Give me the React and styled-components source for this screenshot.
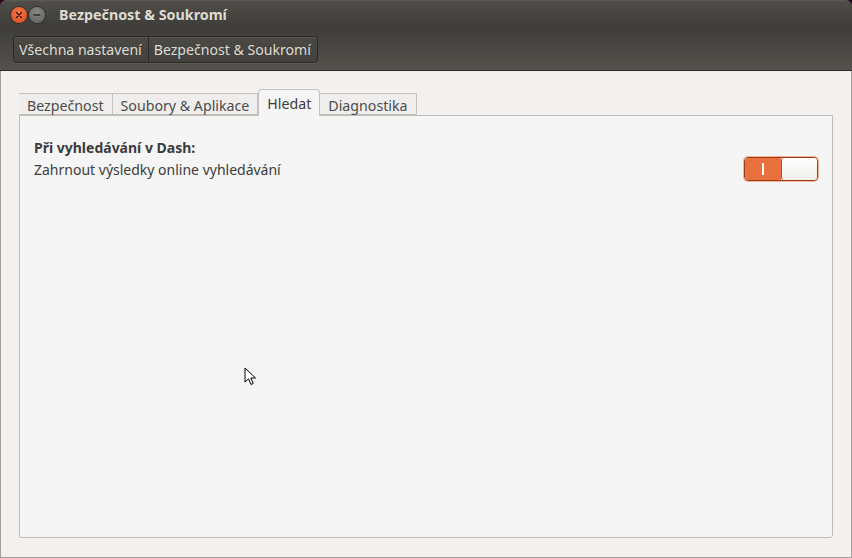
import styled, { createGlobalStyle } from "styled-components";

const GlobalStyle = createGlobalStyle`
  html, body {
    margin: 0;
    padding: 0;
    background: #2c001e;
  }
  body {
    font-family: "Noto Sans", "DejaVu Sans", sans-serif;
  }
`;

const tabs = ["Bezpečnost", "Soubory & Aplikace", "Hledat", "Diagnostika"];

const App = () => {
  return (
    <>
      <GlobalStyle />
      <Window>
        <TitleBar>
          <WinButton $kind="close">
            <svg width="8" height="8" viewBox="0 0 8 8">
              <path d="M1.5 1.5 L6.5 6.5 M6.5 1.5 L1.5 6.5" stroke="#3a1408" strokeWidth="1.3" strokeLinecap="round" />
            </svg>
          </WinButton>
          <WinButton $kind="min">
            <svg width="8" height="8" viewBox="0 0 8 8">
              <path d="M1 4 L7 4" stroke="#2e2d2a" strokeWidth="1.4" strokeLinecap="round" />
            </svg>
          </WinButton>
          <Title>Bezpečnost &amp; Soukromí</Title>
        </TitleBar>
        <Toolbar>
          <Breadcrumbs>
            <Crumb>Všechna nastavení</Crumb>
            <Crumb $last>Bezpečnost &amp; Soukromí</Crumb>
          </Breadcrumbs>
        </Toolbar>
        <Content>
          <TabRow>
            {tabs.map((t) => (
              <Tab key={t} $active={t === "Hledat"}>
                {t}
              </Tab>
            ))}
            <TabFill />
          </TabRow>
          <Panel>
            <Row>
              <TextCol>
                <Heading>Při vyhledávání v Dash:</Heading>
                <Label>Zahrnout výsledky online vyhledávání</Label>
              </TextCol>
              <Switch>
                <SwitchOn>
                  <OnMark />
                </SwitchOn>
                <Knob />
              </Switch>
            </Row>
            <Cursor>
              <svg width="14" height="20" viewBox="0 0 14 20">
                <path
                  d="M1 1 L1 15 L4.5 11.8 L7 17.5 L9.2 16.5 L6.8 11 L11.5 11 Z"
                  fill="#fff"
                  stroke="#000"
                  strokeWidth="1"
                  strokeLinejoin="round"
                />
              </svg>
            </Cursor>
          </Panel>
        </Content>
      </Window>
    </>
  );
};

// 창 전체
const Window = styled.div`
  width: 852px;
  height: 558px;
  display: flex;
  flex-direction: column;
  overflow: hidden;
  border-radius: 6px 6px 0 0;
`;

const TitleBar = styled.div`
  height: 28px;
  display: flex;
  align-items: center;
  padding-left: 11px;
  background: linear-gradient(#4f4e49, #3d3c38);
  border-top: 1px solid #5a5954;
  box-sizing: border-box;
`;

const WinButton = styled.div`
  width: 16px;
  height: 16px;
  border-radius: 50%;
  margin-right: 2px;
  display: flex;
  align-items: center;
  justify-content: center;
  background: ${(p) =>
    p.$kind === "close"
      ? "radial-gradient(circle at 50% 35%, #f47a4a, #d9461f)"
      : "radial-gradient(circle at 50% 35%, #8a8984, #5e5d58)"};
  box-shadow: 0 0 0 1px #2e2d2a;
`;

const Title = styled.div`
  margin-left: 12px;
  color: #dfdbd2;
  font-size: 14.3px;
  font-weight: bold;
`;

const Toolbar = styled.div`
  height: 43px;
  display: flex;
  align-items: center;
  padding-left: 13px;
  background: linear-gradient(#3e3d39, #53524d);
  border-bottom: 1px solid #2f2e2b;
  box-sizing: border-box;
`;

const Breadcrumbs = styled.div`
  display: flex;
  height: 25px;
  border: 1px solid #2c2b28;
  border-radius: 3px;
  background: linear-gradient(#4a4944, #42413d);
  box-shadow: inset 0 1px 0 rgba(255, 255, 255, 0.08), 0 1px 0 rgba(255, 255, 255, 0.06);
`;

const Crumb = styled.div`
  display: flex;
  align-items: center;
  padding: 0 6px 0 5px;
  color: #dfdbd2;
  font-size: 14.1px;
  border-right: ${(p) => (p.$last ? "none" : "1px solid #2c2b28")};
`;

const Content = styled.div`
  flex: 1;
  background: #f2f1f0;
  border-left: 1px solid #a19f9b;
  border-right: 1px solid #a19f9b;
  border-bottom: 1px solid #a19f9b;
  padding: 17px 18px 19px 18px;
  display: flex;
  flex-direction: column;
`;

const TabRow = styled.div`
  display: flex;
  align-items: flex-end;
  height: 27px;
`;

const Tab = styled.div`
  height: ${(p) => (p.$active ? "27px" : "22px")};
  box-sizing: border-box;
  display: flex;
  align-items: center;
  padding: 0 8px;
  font-size: 14.2px;
  color: ${(p) => (p.$active ? "#3c3c3c" : "#4c4c4c")};
  background: ${(p) => (p.$active ? "#f5f5f5" : "#efeeec")};
  border: 1px solid #c6c3be;
  border-bottom: ${(p) => (p.$active ? "none" : "1px solid #c0bdb8")};
  border-left: ${(p) => (p.$active ? "1px solid #c6c3be" : "none")};
  border-radius: ${(p) => (p.$active ? "4px 4px 0 0" : "0")};
  margin-bottom: ${(p) => (p.$active ? "-1px" : "0")};
  padding-top: ${(p) => (p.$active ? "0" : "2px")};
  position: relative;
  z-index: 1;

  &:first-child {
    border-left: none;
  }
`;

const TabFill = styled.div`
  flex: 1;
  height: 1px;
`;

const Panel = styled.div`
  flex: 1;
  position: relative;
  background: #f5f5f5;
  border: 1px solid #c0bdb8;
  border-radius: 0 0 3px 3px;
  padding: 22px 14px 0 14px;
`;

const Row = styled.div`
  display: flex;
  align-items: flex-end;
  justify-content: space-between;
`;

const TextCol = styled.div`
  display: flex;
  flex-direction: column;
  gap: 3px;
`;

const Heading = styled.div`
  font-size: 14px;
  font-weight: bold;
  color: #3c3c3c;
`;

const Label = styled.div`
  font-size: 14px;
  color: #3c3c3c;
`;

const Switch = styled.div`
  width: 72px;
  height: 22px;
  display: flex;
  border: 1px solid #9b3d17;
  border-radius: 4px;
  box-shadow: 0 0 0 1px #f6b59b;
  overflow: hidden;
  margin-bottom: -2px;
`;

const SwitchOn = styled.div`
  flex: 1;
  background: #e9703f;
  display: flex;
  align-items: center;
  justify-content: center;
`;

const OnMark = styled.div`
  width: 2px;
  height: 12px;
  background: #fff;
`;

const Knob = styled.div`
  width: 35px;
  background: linear-gradient(#ffffff, #efeeec);
  border-left: 1px solid #a8532e;
  border-radius: 3px;
`;

// 마우스 커서 (화면 위에 떠 있음)
const Cursor = styled.div`
  position: absolute;
  left: 224px;
  top: 251px;
`;

export default App;
